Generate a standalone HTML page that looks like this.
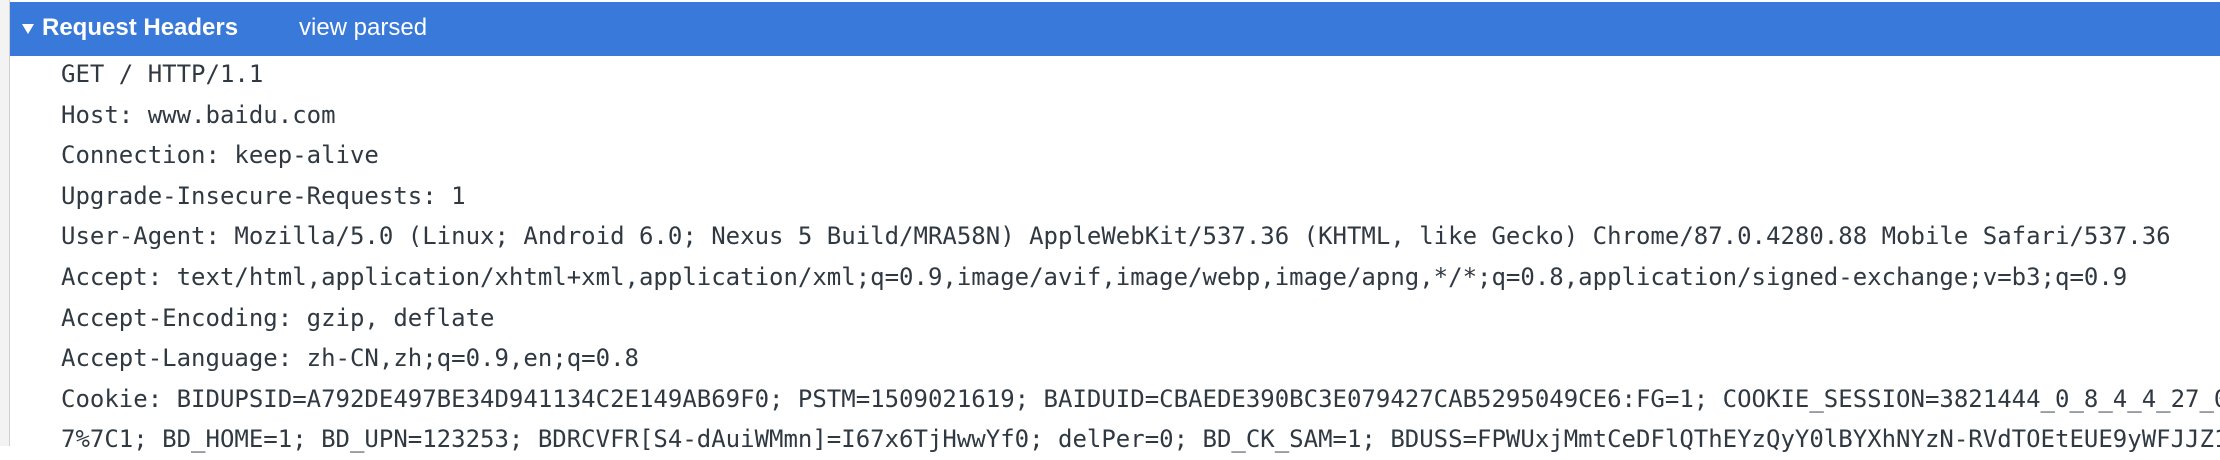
<!DOCTYPE html>
<html><head><meta charset="utf-8"><style>
html,body{margin:0;padding:0;width:2220px;height:446px;overflow:hidden;background:#fff}
.left{position:absolute;left:0;top:0;width:9px;height:446px;background:#f3f3f3;border-right:1px solid #d0d0d0}
.bar{position:absolute;left:10px;top:2px;width:2210px;height:54px;background:#3879d9;color:#fff;font-family:"Liberation Sans",sans-serif;font-size:24px}
.bar .t{position:absolute;left:32px;top:12px;font-weight:bold}
.bar .v{position:absolute;left:289px;top:12px}
.tri{position:absolute;left:12px;top:22px;width:0;height:0;border-left:6px solid transparent;border-right:6px solid transparent;border-top:10px solid #fff}
.lines{position:absolute;left:61px;top:54px;font-family:"DejaVu Sans Mono","Liberation Mono",monospace;font-size:24px;color:#303942;white-space:pre;line-height:40.6px}
</style></head><body>
<div class="left"></div>
<div class="bar"><div class="tri"></div><span class="t">Request Headers</span><span class="v">view parsed</span></div>
<div class="lines">GET / HTTP/1.1
Host: www.baidu.com
Connection: keep-alive
Upgrade-Insecure-Requests: 1
User-Agent: Mozilla/5.0 (Linux; Android 6.0; Nexus 5 Build/MRA58N) AppleWebKit/537.36 (KHTML, like Gecko) Chrome/87.0.4280.88 Mobile Safari/537.36
Accept: text/html,application/xhtml+xml,application/xml;q=0.9,image/avif,image/webp,image/apng,*/*;q=0.8,application/signed-exchange;v=b3;q=0.9
Accept-Encoding: gzip, deflate
Accept-Language: zh-CN,zh;q=0.9,en;q=0.8
Cookie: BIDUPSID=A792DE497BE34D941134C2E149AB69F0; PSTM=1509021619; BAIDUID=CBAEDE390BC3E079427CAB5295049CE6:FG=1; COOKIE_SESSION=3821444_0_8_4_4_27_0
7%7C1; BD_HOME=1; BD_UPN=123253; BDRCVFR[S4-dAuiWMmn]=I67x6TjHwwYf0; delPer=0; BD_CK_SAM=1; BDUSS=FPWUxjMmtCeDFlQThEYzQyY0lBYXhNYzN-RVdTOEtEUE9yWFJJZ1</div>
</body></html>
